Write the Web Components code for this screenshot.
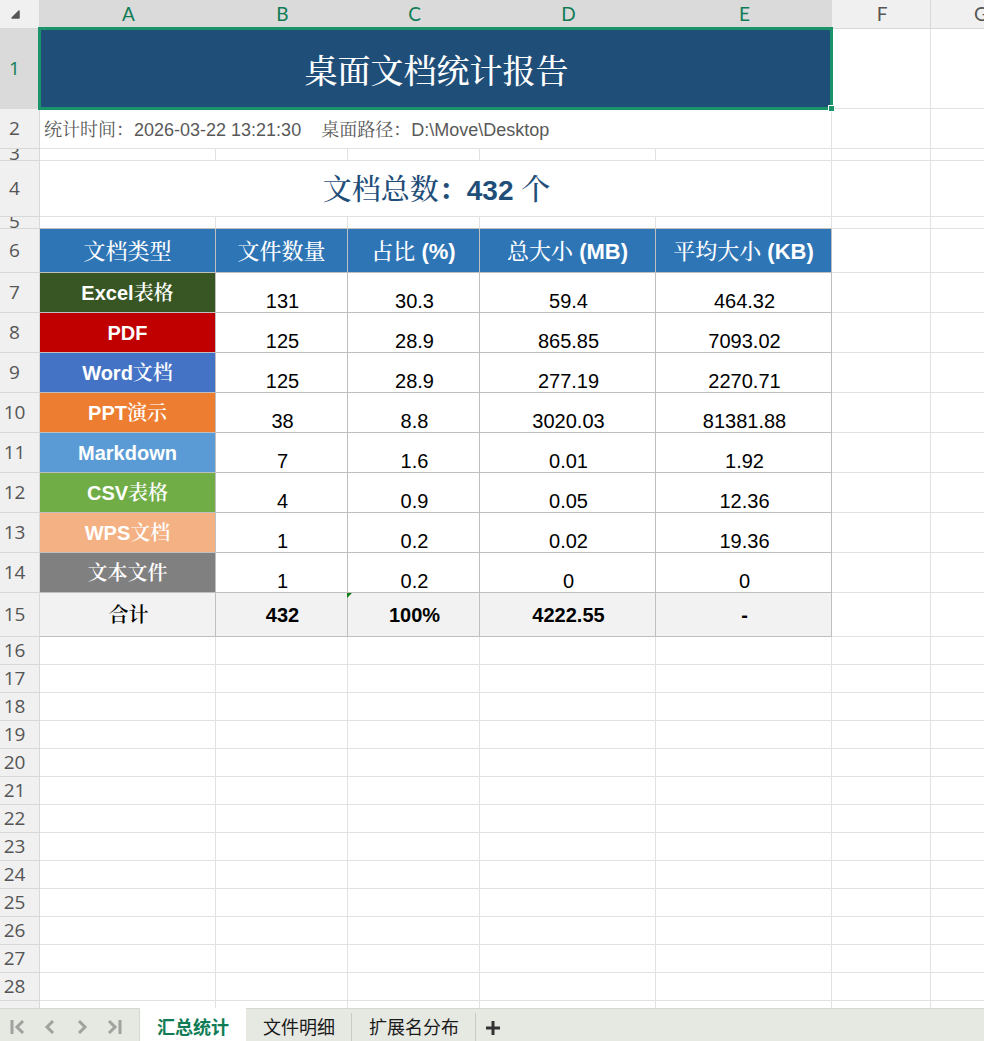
<!DOCTYPE html>
<html lang="zh-CN">
<head>
<meta charset="utf-8">
<title>桌面文档统计报告</title>
<style>
  body { margin: 0; background: #fff; }
</style>
</head>
<body>
<report-workbook>
  <sheet-grid></sheet-grid>
  <sheet-tabs slot="footer">
    <sheet-tab active>汇总统计</sheet-tab>
    <sheet-tab>文件明细</sheet-tab>
    <sheet-tab>扩展名分布</sheet-tab>
  </sheet-tabs>
</report-workbook>

<script>
class ReportWorkbook extends HTMLElement {
  constructor() {
    super();
    this.attachShadow({ mode: 'open' }).innerHTML = `
      <style>
        :host { display: flex; flex-direction: column; height: 100vh; overflow: hidden;
          font-family: "Liberation Sans", "Noto Serif CJK SC", "Noto Sans CJK SC", sans-serif; }
        main { flex: 1; min-height: 0; display: flex; }
      </style>
      <main><slot></slot></main>
      <slot name="footer"></slot>`;
  }
}

const ROWS = [
  ['Excel表格', '131', '30.3', '59.4', '464.32', '#375623'],
  ['PDF', '125', '28.9', '865.85', '7093.02', '#c00000'],
  ['Word文档', '125', '28.9', '277.19', '2270.71', '#4472c4'],
  ['PPT演示', '38', '8.8', '3020.03', '81381.88', '#ed7d31'],
  ['Markdown', '7', '1.6', '0.01', '1.92', '#5b9bd5'],
  ['CSV表格', '4', '0.9', '0.05', '12.36', '#70ad47'],
  ['WPS文档', '1', '0.2', '0.02', '19.36', '#f4b183'],
  ['文本文件', '1', '0.2', '0', '0', '#808080']
];
const COLUMNS = [176, 132, 132, 176, 176, 99];

// Han characters take a lighter weight than the bold Latin text beside them.
const han = (text) => text.replace(/[\u4e00-\u9fff]+/g, '<span class="han">$&</span>');

class SheetGrid extends HTMLElement {
  constructor() {
    super();
    this.attachShadow({ mode: 'open' }).innerHTML = `
      <style>
        :host { display: block; flex: 1; min-width: 0; overflow: hidden; background: #fff; }
        table { table-layout: fixed; border-collapse: separate; border-spacing: 0; font-size: 20px; }
        th, td { box-sizing: border-box; padding: 0 0 0 2px; text-align: center; vertical-align: middle;
          border: 0 solid #e2e2e2; border-width: 0 1px 1px 0; position: relative; white-space: pre;
          line-height: 24px; font-weight: 400; }
        .han { font-weight: 500; }
        .head { background: #f0f0f0; color: #555; border-color: #d8d8d8;
          font-family: Lato, sans-serif; font-size: 19px; }
        .head.on { background: #dadada; color: #107c55; border-color: #dadada; }
        .head.num { padding: 0 10px 0 0; font-family: "Open Sans", "Noto Sans", sans-serif; }
        .num div { box-sizing: border-box; display: flex; align-items: center; justify-content: center;
          overflow: hidden; height: calc(var(--h) - 1px); padding-bottom: 2px; }
        .num.thin div { align-items: flex-end; padding-bottom: 0; line-height: 14px; }
        .corner svg { display: block; margin-left: 8px; }
        .title { background: #1f4e79; color: #fff; font-size: 33px; padding-top: 6px; }
        .selection { position: absolute; inset: -2px; border: 3px solid #1a936a; z-index: 1; }
        .handle { position: absolute; right: -3px; bottom: -3px; width: 5px; height: 5px;
          background: #1a936a; box-shadow: 0 0 0 1px #fff; z-index: 2; }
        .meta { text-align: left; padding: 2px 0 0 4px; font-size: 18px; color: #595959; }
        .total { font-size: 28px; font-weight: 700; color: #1f4e79; line-height: 32px; padding-top: 4px; }
        .total .han { font-size: 29px; }
        .field { background: #2e75b6; color: #fff; font-size: 22px; font-weight: 700;
          border-color: #bfbfbf; padding: 2px 0 0; }
        .edge { border-bottom-color: #bfbfbf; }
        .kind { background: var(--c); color: #fff; font-weight: 700; border-color: #bfbfbf; padding: 0; }
        .value { vertical-align: bottom; border-color: #bfbfbf; color: #000; line-height: 22px; }
        .sum { background: #f2f2f2; font-weight: 700; border-color: #bfbfbf; color: #000; }
        .kind .han, .sum .han { font-weight: 600; }
        .mark { position: absolute; left: -1px; top: 0; display: block; }
      </style>
      <table><colgroup></colgroup><thead></thead><tbody></tbody></table>`;
  }

  connectedCallback() {
    this.render();
    addEventListener('resize', () => this.render());
  }

  render() {
    const root = this.shadowRoot;
    const widths = COLUMNS.slice();
    let x = 40 + widths.reduce((a, b) => a + b, 0);
    while (x < innerWidth) { widths.push(99); x += 99; }
    const blanks = (from) => '<td></td>'.repeat(widths.length - from);
    root.querySelector('table').style.width = x + 'px';
    root.querySelector('colgroup').innerHTML =
      [40, ...widths].map(w => `<col style="width:${w}px">`).join('');
    root.querySelector('thead').innerHTML = `<tr style="height:29px">
      <th class="head corner" aria-label="全选"><svg width="10" height="10" viewBox="0 0 10 10"><path d="M9 2v7H2z" fill="#555" stroke="#555" stroke-width="1.5" stroke-linejoin="round"/></svg></th>
      ${widths.map((w, i) => `<th class="head ${i < 5 ? 'on' : ''}">${String.fromCharCode(65 + i)}</th>`).join('')}</tr>`;

    const gap = '<td class="edge"></td>'.repeat(5);
    const body = [
      [80, `<td class="title" colspan="5">${han('桌面文档统计报告')}<span class="selection"></span><span class="handle"></span></td>`, 5],
      [40, '<td class="meta" colspan="5">统计时间：2026-03-22 13:21:30    桌面路径：D:\\Move\\Desktop</td>', 5],
      [12, '', 0],
      [56, `<td class="total" colspan="5">${han('文档总数')}：432 ${han('个')}</td>`, 5],
      [12, gap, 5],
      [44, ['文档类型', '文件数量', '占比 (%)', '总大小 (MB)', '平均大小 (KB)'].map(t => `<th class="field">${han(t)}</th>`).join(''), 5],
      ...ROWS.map(r => [40, `<th class="kind" style="--c:${r[5]}">${han(r[0])}</th>` +
        r.slice(1, 5).map(v => `<td class="value">${v}</td>`).join(''), 5]),
      [44, ['合计', '432', '100%', '4222.55', '-'].map((t, i) => `<td class="sum">${han(t)}${i === 2
        ? '<svg class="mark" width="5" height="5"><path d="M0 0h5L0 5z" fill="#107c10"/></svg>' : ''}</td>`).join(''), 5]
    ];
    let y = 29 + body.reduce((a, r) => a + r[0], 0);
    while (y < innerHeight - 33) { body.push([28, '', 0]); y += 28; }
    root.querySelector('tbody').innerHTML = body.map(([h, cells, n], i) =>
      `<tr style="height:${h}px;--h:${h}px"><th class="head num ${i ? '' : 'on'} ${h < 20 ? 'thin' : ''}"><div>${i + 1}</div></th>${cells}${blanks(n)}</tr>`).join('');
  }
}

class SheetTab extends HTMLElement {
  constructor() {
    super();
    this.attachShadow({ mode: 'open' }).innerHTML = `
      <style>
        :host { display: flex; align-items: stretch; }
        button { border: 0; margin: 0; padding: 3px 16px 0 17px; background: none; color: #1a1a1a;
          font: 18px/24px "Noto Sans CJK SC", sans-serif; white-space: nowrap; }
        :host::after { content: ""; width: 1px; margin-top: 5px; background: #c9cbc5; }
        :host([active])::after { margin-top: 0; background: #fff; }
        :host([active]) button { background: #fff; color: #107c55; font-weight: 700; }
      </style>
      <button type="button"><slot></slot></button>`;
  }
}

class SheetTabs extends HTMLElement {
  constructor() {
    super();
    const icon = (label, d) => `<button type="button" aria-label="${label}"><svg width="16" height="16" viewBox="0 0 16 16"><path d="${d}"/></svg></button>`;
    this.attachShadow({ mode: 'open' }).innerHTML = `
      <style>
        :host { display: flex; height: 33px; flex: none; background: #e6e8e2; box-shadow: inset 0 1px #d5d7d1; }
        nav { box-sizing: border-box; width: 140px; padding: 5px 16px 0 9px; display: flex; align-items: center;
          justify-content: space-between; border-right: 1px solid #d5d7d1; }
        button { border: 0; padding: 0; background: none; display: flex; align-items: center; }
        path { fill: none; stroke: #a0a29d; stroke-width: 3; }
        .add { padding: 6px 9px 0; }
        .add path { stroke: #333; }
      </style>
      <nav aria-label="工作表导航">
        ${icon('第一个', 'M3 1v14M14 2L8 8l6 6')}
        ${icon('上一个', 'M11 2L5 8l6 6')}
        ${icon('下一个', 'M5 2l6 6-6 6')}
        ${icon('最后一个', 'M2 2l6 6-6 6M13 1v14')}
      </nav>
      <slot></slot>
      <button class="add" type="button" aria-label="新建工作表"><svg width="16" height="16" viewBox="0 0 16 16"><path d="M8 1v14M1 8h14"/></svg></button>`;
  }
}

customElements.define('report-workbook', ReportWorkbook);
customElements.define('sheet-grid', SheetGrid);
customElements.define('sheet-tab', SheetTab);
customElements.define('sheet-tabs', SheetTabs);
</script>
</body>
</html>
